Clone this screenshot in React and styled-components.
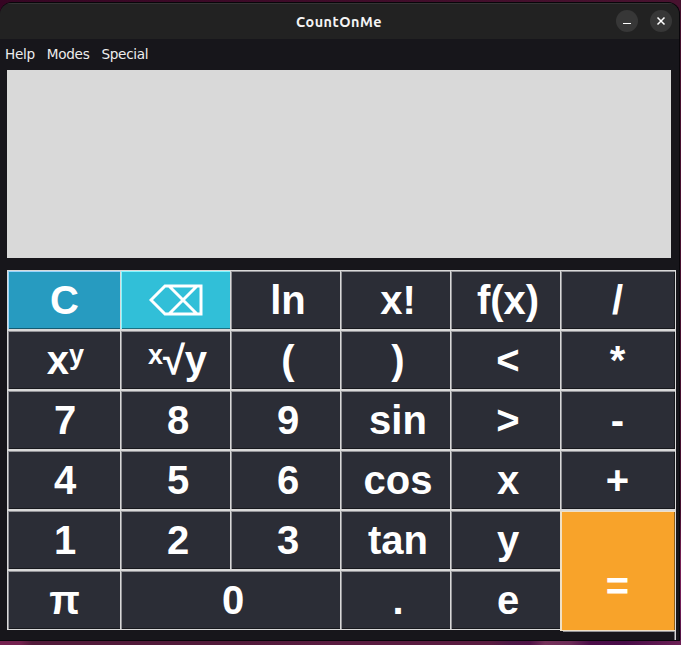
import React from "react";
import styled, { createGlobalStyle } from "styled-components";

const GlobalStyle = createGlobalStyle`
  * { box-sizing: border-box; }
  body { margin: 0; overflow: hidden; background: #3b0b28; }
`;

const Desktop = styled.div`
  width: 681px;
  height: 645px;
  overflow: hidden;
  background:
    linear-gradient(90deg, #74214f 0 20px, #521a3a 32px 240px, #5a1c40 330px 490px, #4d1745 510px, #501247 530px, #75315a 545px, #6d2c58 570px, #4c0d49 590px, #480c48 625px, #6c2055 681px) 0 640px / 681px 5px no-repeat,
    linear-gradient(#44112d 0, #49102f 130px, #45102f 510px, #792256 560px, #73205a 605px, #4b103f 645px) 680px 0 / 1px 645px no-repeat,
    linear-gradient(90deg, #360523, #48122f);
`;

const Window = styled.div`
  display: flex;
  flex-direction: column;
  width: 680px;
  height: 639px;
  margin-top: 2px;
  border: solid #08060a;
  border-width: 1px 1px 1px 0;
  border-radius: 12px 12px 0 0;
  overflow: hidden;
  background: #17161b;
`;

const TitleBar = styled.header`
  display: grid;
  grid-template-columns: 1fr auto 1fr;
  align-items: center;
  height: 36px;
  flex: none;
  padding-right: 7px;
  background: #222222;
  box-shadow: inset 0 1px #343434;
`;

const Title = styled.h1`
  grid-column: 2;
  margin: 1px 0 0 6px;
  color: #f4f4f4;
  font: 700 14.4px/20px Ubuntu, "Noto Sans", sans-serif;
  letter-spacing: 0.5px;
`;

const WindowControls = styled.div`
  display: flex;
  justify-content: flex-end;
  gap: 12px;
`;

const ControlButton = styled.button`
  display: grid;
  place-items: center;
  width: 22px;
  height: 22px;
  padding: 0;
  border: 0;
  border-radius: 50%;
  background: #373737;
`;

const MenuBar = styled.nav`
  display: flex;
  gap: 12px;
  height: 31px;
  flex: none;
  padding: 5px 5px 0;
`;

const MenuItem = styled.span`
  color: #ededed;
  font: 13.6px/20px "DejaVu Sans", sans-serif;
  letter-spacing: -0.3px;
`;

const Display = styled.div`
  width: 664px;
  height: 188px;
  flex: none;
  margin: 0 0 12px 7px;
  background: #d9d9d9;
`;

const Keypad = styled.main`
  display: grid;
  grid-template-columns: 113px 110px 110px 110px 110px 116px;
  grid-template-rows: repeat(6, 60px);
  margin-left: 7px;
`;

const tones = {
  dark: { fill: "#2b2d36", light: "#929297", shade: "#17181d" },
  blue: { fill: "#279bc0", light: "#9ad5fc", shade: "#155a70" },
  cyan: { fill: "#31bfd8", light: "#86f6ff", shade: "#1b7182" },
};

const insets = {
  clear: "0 0 0 1px",
  first: "0 0 0 2px",
  power: "0 0 0 3px",
  middle: "0 0 0 5px",
  root: "0 0 0 4px",
  icon: "0 0 0 1px",
  last: "0 1px 0 0",
};

const Key = styled.button`
  display: flex;
  align-items: center;
  justify-content: center;
  grid-column: span ${(p) => p.$span || 1};
  padding: ${(p) => insets[p.$place]};
  border: 0 solid #d9d9d9;
  border-width: 1px ${(p) => (p.$place === "last" ? 1 : 0)}px 1px 1px;
  background: ${(p) => tones[p.$tone].fill};
  box-shadow: inset 1px 1px ${(p) => tones[p.$tone].light},
    inset ${(p) => (p.$place === "last" ? "-1px" : "0")} -1px ${(p) => tones[p.$tone].shade};
  color: #fff;
  font: 700 40px/46px "Liberation Sans", Arial, sans-serif;
  white-space: pre;
`;

const Raised = styled.span`
  font-size: 27px;
  line-height: 27px;
  transform: translateY(-5px);
`;

const EqualsKey = styled.button`
  grid-area: 5 / 6 / 7 / 7;
  display: flex;
  flex-direction: column;
  justify-content: flex-start;
  height: 130px;
  padding: 0;
  border: solid #d9d9d9;
  border-width: 1px 1px 0 0;
  overflow: hidden;
  background: #17161b;
  box-shadow: inset -1px 0 #727277;
`;

const EqualsFace = styled.span`
  display: flex;
  align-items: center;
  justify-content: center;
  width: 115px;
  height: 120px;
  padding: 30px 2px 0 0;
  border: solid #efe0c7;
  border-width: 1px 0 1px 2px;
  background: #f8a32a;
  box-shadow: inset -1px 0 #926018, 3px 1px #929297;
  color: #fff;
  font: 700 40px/46px "Liberation Sans", Arial, sans-serif;
`;

const KEYS = [
  { label: "C", tone: "blue", place: "clear" },
  { label: "erase", icon: true, tone: "cyan", place: "icon" },
  { label: "ln" }, { label: "x!" }, { label: "f(x)" }, { label: "/", place: "last" },
  { label: "x", after: "y", place: "power" }, { label: "√y", before: "x", place: "root" },
  { label: "(" }, { label: ")" }, { label: "<" }, { label: "*", place: "last" },
  { label: "7", place: "first" }, { label: "8" }, { label: "9" }, { label: "sin" }, { label: ">" }, { label: "-", place: "last" },
  { label: "4", place: "first" }, { label: "5" }, { label: "6" }, { label: "cos" }, { label: "x" }, { label: "+", place: "last" },
  { label: "1", place: "first" }, { label: "2" }, { label: "3" }, { label: "tan" }, { label: "y" },
  { label: "π", place: "clear" }, { label: "0", span: 2 }, { label: "." }, { label: "e" },
];

function EraseIcon() {
  return (
    <svg width="54" height="32" viewBox="0 0 54 32" fill="none" stroke="#fff" strokeWidth="3">
      <path d="M2 16 16 2H52V30H16ZM20 2 48 30M20 30 48 2" />
    </svg>
  );
}

export default function App() {
  return (
    <Desktop>
      <GlobalStyle />
      <Window>
        <TitleBar>
          <Title>CountOnMe</Title>
          <WindowControls>
            <ControlButton aria-label="Minimize">
              <svg width="10" height="10"><path d="M1 7.5H9" stroke="#fff" /></svg>
            </ControlButton>
            <ControlButton aria-label="Close">
              <svg width="10" height="10"><path d="M1.5 1.5 8.5 8.5M8.5 1.5 1.5 8.5" stroke="#fff" strokeWidth="1.5" /></svg>
            </ControlButton>
          </WindowControls>
        </TitleBar>
        <MenuBar>
          <MenuItem>Help</MenuItem>
          <MenuItem>Modes</MenuItem>
          <MenuItem>Special</MenuItem>
        </MenuBar>
        <Display />
        <Keypad>
          {KEYS.map((k, i) => (
            <Key key={i} $tone={k.tone || "dark"} $span={k.span} $place={k.place || "middle"} aria-label={k.icon ? k.label : undefined}>
              {k.before && <Raised>{k.before}</Raised>}
              {k.icon ? <EraseIcon /> : <span>{k.label}</span>}
              {k.after && <Raised>{k.after}</Raised>}
            </Key>
          ))}
          <EqualsKey><EqualsFace>=</EqualsFace></EqualsKey>
        </Keypad>
      </Window>
    </Desktop>
  );
}
